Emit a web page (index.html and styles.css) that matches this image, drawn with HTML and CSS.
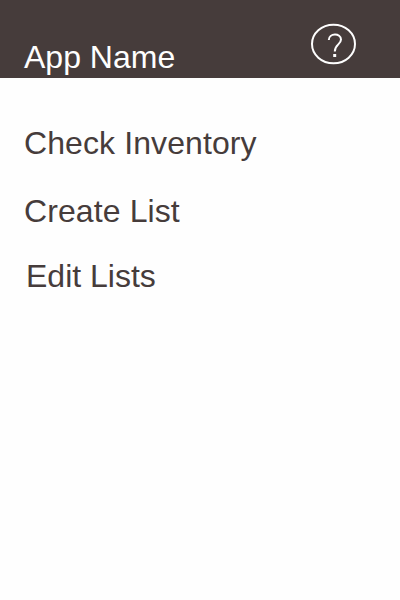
FILE: index.html
```html
<!DOCTYPE html>
<html lang="en">
<head>
<meta charset="utf-8">
<title>App Name</title>
<link rel="stylesheet" href="styles.css">
</head>
<body>
<header class="bar">
<h1 class="title">App Name</h1>
<svg class="help" width="48" height="42" viewBox="0 0 48 42" role="img" aria-label="Help">
<ellipse cx="24.5" cy="21" rx="21.5" ry="19.3"/>
<path d="M19.8 17C19.8 9.8 32 9.8 32 16.5C32 21.5 25.8 21.5 25.8 28.5"/>
<path class="dot" d="M25.7 31V34"/>
</svg>
</header>
<nav class="menu">
<a class="item check">Check Inventory</a>
<a class="item create">Create List</a>
<a class="item edit">Edit Lists</a>
</nav>
</body>
</html>
```
FILE: styles.css
```css
body {
  margin: 0;
  height: 600px;
  overflow: hidden;
  background: #fefefe;
  color: #463c3b;
  font: 32px/36px "Liberation Sans", Arial, sans-serif;
}
.bar {
  display: flex;
  justify-content: space-between;
  height: 78px;
  padding: 0 43px 0 24px;
  box-sizing: border-box;
  background: #463c3b;
}
.title {
  margin: 39px 0 0;
  color: #fefefe;
  font-size: inherit;
  font-weight: 400;
}
.help {
  margin-top: 23px;
  fill: none;
  stroke: #fefefe;
  stroke-width: 2;
}
.dot { stroke-width: 3; }
.menu {
  display: flex;
  flex-direction: column;
  padding: 47px 24px 0;
}
.check, .create { letter-spacing: 0.1px; }
.create { margin-top: 32px; }
.edit { margin: 29px 0 0 2px; }
```
